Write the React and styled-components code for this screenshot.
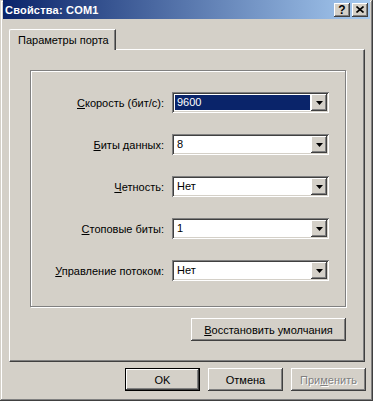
import { Fragment } from "react";
import styled, { createGlobalStyle, css } from "styled-components";

const GlobalStyle = createGlobalStyle`
  html, body {
    margin: 0;
    padding: 0;
    background: #D4D0C8;
  }
  body {
    font-family: "Liberation Sans", Arial, sans-serif;
    font-size: 11px;
    color: #000000;
  }
`

const raised = css`
  background: #D4D0C8;
  box-shadow:
    inset -1px -1px #404040,
    inset 1px 1px #FFFFFF,
    inset -2px -2px #808080,
    inset 2px 2px #D4D0C8;
`

const Window = styled.div`
  box-sizing: border-box;
  display: flex;
  flex-direction: column;
  width: 373px;
  height: 401px;
  padding: 0 3px 3px 3px;
  background: #D4D0C8;
  box-shadow:
    inset -1px -1px #404040,
    inset 1px 1px #D4D0C8,
    inset -2px -2px #808080,
    inset 2px 2px #FFFFFF;
`

const TitleBar = styled.div`
  display: flex;
  align-items: center;
  justify-content: space-between;
  height: 19px;
  padding: 0 2px 0 2px;
  background: linear-gradient(to right, #0A246A, #A6CAF0);
`

const Caption = styled.span`
  color: #FFFFFF;
  font-weight: bold;
  font-size: 11px;
  letter-spacing: 0.2px;
`

const CaptionButtons = styled.div`
  display: flex;
  gap: 2px;
`

const CaptionButton = styled.div`
  ${raised};
  display: flex;
  align-items: center;
  justify-content: center;
  width: 16px;
  height: 14px;
  font-weight: bold;
  font-size: 12px;
  line-height: 14px;
`

const Body = styled.div`
  display: flex;
  flex-direction: column;
  padding: 10px 5px 0 6px;
`

const TabStrip = styled.div`
  display: flex;
`

const Tab = styled.div`
  position: relative;
  z-index: 1;
  box-sizing: border-box;
  width: 107px;
  height: 21px;
  margin-bottom: -1px;
  padding: 4px 0 0 8px;
  background: #D4D0C8;
  border-top: 1px solid #FFFFFF;
  border-left: 1px solid #FFFFFF;
  border-right: 1px solid #404040;
  border-top-left-radius: 2px;
  box-shadow: inset -1px 0 #808080;
`

const Panel = styled.div`
  box-sizing: border-box;
  display: flex;
  flex-direction: column;
  height: 313px;
  padding: 20px 18px 0 20px;
  border-top: 1px solid #FFFFFF;
  border-left: 1px solid #FFFFFF;
  border-right: 1px solid #404040;
  border-bottom: 1px solid #404040;
  box-shadow: inset -1px -1px #808080;
`

const Frame = styled.div`
  box-sizing: border-box;
  height: 237px;
  padding: 21px 16px 0 10px;
  border: 1px solid #808080;
  box-shadow: inset 1px 1px #FFFFFF, 1px 1px #FFFFFF;
`

const FieldGrid = styled.div`
  display: grid;
  grid-template-columns: 1fr 157px;
  column-gap: 8px;
  row-gap: 21px;
  align-items: center;
`

const Label = styled.div`
  text-align: right;
  white-space: nowrap;
`

const Combo = styled.div`
  box-sizing: border-box;
  display: flex;
  height: 21px;
  padding: 2px;
  background: #FFFFFF;
  box-shadow:
    inset 1px 1px #808080,
    inset -1px -1px #FFFFFF,
    inset 2px 2px #404040,
    inset -2px -2px #D4D0C8;
`

const ComboText = styled.div`
  flex: 1;
  margin: 1px;
  padding-left: 2px;
  line-height: 15px;
  ${(p) => p.$selected && css`
    background: #0A246A;
    color: #FFFFFF;
  `}
`

const DropButton = styled.div`
  ${raised};
  display: flex;
  align-items: center;
  justify-content: center;
  width: 16px;
  height: 17px;
`

const PanelFooter = styled.div`
  display: flex;
  justify-content: flex-end;
  margin-top: 11px;
`

const Button = styled.div`
  ${raised};
  box-sizing: border-box;
  display: flex;
  align-items: center;
  justify-content: center;
  width: ${(p) => p.$width || 75}px;
  height: 23px;
  ${(p) => p.$default && css`
    border: 1px solid #000000;
  `}
  ${(p) => p.$disabled && css`
    color: #808080;
    text-shadow: 1px 1px 0 #FFFFFF;
  `}
`

const ButtonRow = styled.div`
  display: flex;
  justify-content: flex-end;
  gap: 8px;
  margin-top: 6px;
  margin-right: -1px;
`

const Key = styled.span`
  text-decoration: underline;
`

const DownArrow = () => (
  <svg width="7" height="4" viewBox="0 0 7 4">
    <path d="M0 0h7L3.5 4z" fill="#000" />
  </svg>
)

const CloseIcon = () => (
  <svg width="8" height="7" viewBox="0 0 8 7">
    <path d="M0.5 0.5L7.5 6.5M7.5 0.5L0.5 6.5" stroke="#000" strokeWidth="1.6" />
  </svg>
)

const fields = [
  { key: "С", rest: "корость (бит/с):", value: "9600", selected: true },
  { key: "Б", rest: "иты данных:", value: "8" },
  { key: "Ч", rest: "етность:", value: "Нет" },
  { key: "С", rest: "топовые биты:", value: "1" },
  { key: "У", rest: "правление потоком:", value: "Нет" },
]

function App() {
  return (
    <>
      <GlobalStyle />
      <Window>
        <TitleBar>
          <Caption>Свойства: COM1</Caption>
          <CaptionButtons>
            <CaptionButton>?</CaptionButton>
            <CaptionButton><CloseIcon /></CaptionButton>
          </CaptionButtons>
        </TitleBar>

        <Body>
          <TabStrip>
            <Tab>Параметры порта</Tab>
          </TabStrip>

          <Panel>
            <Frame>
              <FieldGrid>
                {fields.map((f) => (
                  <Fragment key={f.rest}>
                    <Label><Key>{f.key}</Key>{f.rest}</Label>
                    <Combo>
                      <ComboText $selected={f.selected}>{f.value}</ComboText>
                      <DropButton><DownArrow /></DropButton>
                    </Combo>
                  </Fragment>
                ))}
              </FieldGrid>
            </Frame>

            <PanelFooter>
              <Button $width={155}><span><Key>В</Key>осстановить умолчания</span></Button>
            </PanelFooter>
          </Panel>

          <ButtonRow>
            <Button $default>OK</Button>
            <Button>Отмена</Button>
            <Button $disabled><span>При<Key>м</Key>енить</span></Button>
          </ButtonRow>
        </Body>
      </Window>
    </>
  )
}

export default App;
